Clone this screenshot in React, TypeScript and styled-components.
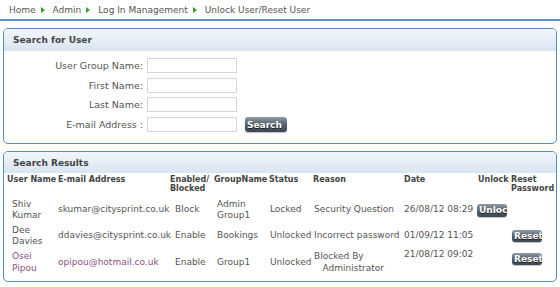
import React from "react";
import styled, { createGlobalStyle } from "styled-components";

const Global = createGlobalStyle`
  html, body { margin: 0; padding: 0; background: #fff; }
  body { font-family: "DejaVu Sans", Verdana, sans-serif; font-size: 9px; color: #555; }
`;

const Page = styled.div`
  width: 560px;
  height: 287px;
  overflow: hidden;
  background: #fff;
`;

const Crumbs = styled.nav`
  height: 19px;
  display: flex;
  align-items: center;
  padding-left: 9px;
  border-bottom: 2px solid #5a90cc;
  color: #555;
  font-size: 9px;
`;

const Crumb = styled.span`
  white-space: nowrap;
`;

const Arrow = styled.span`
  display: inline-block;
  width: 0;
  height: 0;
  margin: 0 8px 0 5px;
  border-top: 3.5px solid transparent;
  border-bottom: 3.5px solid transparent;
  border-left: 4px solid #3c9a2c;
`;

const Panel = styled.section<{ $h: number; $mt: number }>`
  margin: ${(p) => p.$mt}px 3px 0 3px;
  height: ${(p) => p.$h}px;
  box-sizing: border-box;
  border: 1.5px solid #4f8ad0;
  border-radius: 5px;
  overflow: hidden;
  display: flex;
  flex-direction: column;
`;

const PanelHead = styled.header<{ $h: number }>`
  height: ${(p) => p.$h}px;
  flex: none;
  display: flex;
  align-items: center;
  padding-left: 9px;
  background: linear-gradient(#f2f6fb, #d9e5f2);
  font-weight: bold;
  color: #444;
  font-size: 9px;
`;

const Form = styled.div`
  display: grid;
  grid-template-columns: 139px 90px 42px;
  grid-auto-rows: 15px;
  column-gap: 4px;
  row-gap: 4.7px;
  padding-top: 7px;
  align-items: center;
`;

const Label = styled.label`
  text-align: right;
  white-space: nowrap;
  color: #555;
  font-size: 9.5px;
`;

const Input = styled.input`
  box-sizing: border-box;
  width: 90px;
  height: 15px;
  border: 1px solid #d6d6d6;
  margin: 0;
  padding: 0;
  background: #fff;
`;

const Btn = styled.button<{ $w: number; $h: number; $ml?: number }>`
  box-sizing: border-box;
  width: ${(p) => p.$w}px;
  height: ${(p) => p.$h}px;
  margin: 0 0 0 ${(p) => p.$ml ?? 0}px;
  padding: 0 0 0 2px;
  border: none;
  border-radius: 3px;
  background: linear-gradient(#8f9ba7, #56636f 50%, #3b4651);
  color: #fff;
  font-family: "DejaVu Sans", Verdana, sans-serif;
  font-weight: bold;
  font-size: 9px;
  text-shadow: 0 1px 0 #222;
  white-space: nowrap;
  overflow: hidden;
  text-align: left;
  box-shadow: 0 1px 1px rgba(0, 0, 0, 0.25);
  display: block;
`;

const Table = styled.table`
  border-collapse: collapse;
  table-layout: fixed;
  margin-left: 1px;
  width: 552px;
`;

const Th = styled.th`
  text-align: left;
  vertical-align: top;
  font-weight: bold;
  font-size: 8px;
  color: #444;
  padding: 2px 0 0 2px;
  line-height: 9px;
  height: 23.5px;
  box-sizing: border-box;
  white-space: nowrap;
`;

const Td = styled.td<{ $pl?: number; $valign?: string; $pt?: number; $purple?: boolean }>`
  padding: ${(p) => p.$pt ?? 0}px 0 0 ${(p) => p.$pl ?? 2}px;
  vertical-align: ${(p) => p.$valign ?? "middle"};
  line-height: 11.5px;
  color: ${(p) => (p.$purple ? "#8a517f" : "#555")};
  white-space: nowrap;
`;

const Tr = styled.tr<{ $h: number }>`
  height: ${(p) => p.$h}px;
`;

type Row = {
  name: [string, string];
  email: string;
  enabled: string;
  group: [string, string?];
  status: string;
  reason: [string, string?];
  date: string;
  unlock?: boolean;
  reset?: boolean;
  purple?: boolean;
  top?: boolean;
  h: number;
};

const rows: Row[] = [
  {
    name: ["Shiv", "Kumar"],
    email: "skumar@citysprint.co.uk",
    enabled: "Block",
    group: ["Admin", "Group1"],
    status: "Locked",
    reason: ["Security Question"],
    date: "26/08/12 08:29",
    unlock: true,
    h: 27,
  },
  {
    name: ["Dee", "Davies"],
    email: "ddavies@citysprint.co.uk",
    enabled: "Enable",
    group: ["Bookings"],
    status: "Unlocked",
    reason: ["Incorrect password"],
    date: "01/09/12 11:05",
    reset: true,
    h: 25,
  },
  {
    name: ["Osei", "Pipou"],
    email: "opipou@hotmail.co.uk",
    enabled: "Enable",
    group: ["Group1"],
    status: "Unlocked",
    reason: ["Blocked By", "Administrator"],
    date: "21/08/12 09:02",
    reset: true,
    purple: true,
    top: true,
    h: 28,
  },
];

const cols = [51, 112, 44, 55, 44, 91, 74, 33, 48];

export default function App() {
  return (
    <Page>
      <Global />
      <Crumbs>
        <Crumb>Home</Crumb>
        <Arrow />
        <Crumb>Admin</Crumb>
        <Arrow />
        <Crumb>Log In Management</Crumb>
        <Arrow />
        <Crumb>Unlock User/Reset User</Crumb>
      </Crumbs>

      <Panel $h={116} $mt={7}>
        <PanelHead $h={22}>Search for User</PanelHead>
        <Form>
          <Label>User Group Name:</Label>
          <Input />
          <span />
          <Label>First Name:</Label>
          <Input />
          <span />
          <Label>Last Name:</Label>
          <Input />
          <span />
          <Label>E-mail Address :</Label>
          <Input />
          <Btn $w={42} $h={15} $ml={4}>
            Search
          </Btn>
        </Form>
      </Panel>

      <Panel $h={131} $mt={7}>
        <PanelHead $h={21}>Search Results</PanelHead>
        <Table>
          <colgroup>
            {cols.map((w, i) => (
              <col key={i} style={{ width: w }} />
            ))}
          </colgroup>
          <thead>
            <tr>
              <Th>User Name</Th>
              <Th>E-mail Address</Th>
              <Th>
                Enabled/
                <br />
                Blocked
              </Th>
              <Th>GroupName</Th>
              <Th>Status</Th>
              <Th>Reason</Th>
              <Th>Date</Th>
              <Th>Unlock</Th>
              <Th>
                Reset
                <br />
                Password
              </Th>
            </tr>
          </thead>
          <tbody>
            {rows.map((r) => (
              <Tr key={r.email} $h={r.h}>
                <Td $pl={7} $purple={r.purple}>
                  {r.name[0]}
                  <br />
                  {r.name[1]}
                </Td>
                <Td $purple={r.purple}>{r.email}</Td>
                <Td $pl={7}>{r.enabled}</Td>
                <Td $pl={5}>
                  {r.group[0]}
                  {r.group[1] && (
                    <>
                      <br />
                      {r.group[1]}
                    </>
                  )}
                </Td>
                <Td $pl={3}>{r.status}</Td>
                <Td $pl={3}>
                  {r.reason[0]}
                  {r.reason[1] && (
                    <>
                      <br />
                      &nbsp;&nbsp;&nbsp;{r.reason[1]}
                    </>
                  )}
                </Td>
                <Td $valign={r.top ? "top" : "middle"}>{r.date}</Td>
                <Td $pl={1}>
                  {r.unlock && (
                    <Btn $w={30} $h={13}>
                      Unlock
                    </Btn>
                  )}
                </Td>
                <Td $pl={3} $valign={r.top ? "top" : "middle"} $pt={r.top ? 4 : 0}>
                  {r.reset && (
                    <Btn $w={30} $h={12}>
                      Reset
                    </Btn>
                  )}
                </Td>
              </Tr>
            ))}
          </tbody>
        </Table>
      </Panel>
    </Page>
  );
}
